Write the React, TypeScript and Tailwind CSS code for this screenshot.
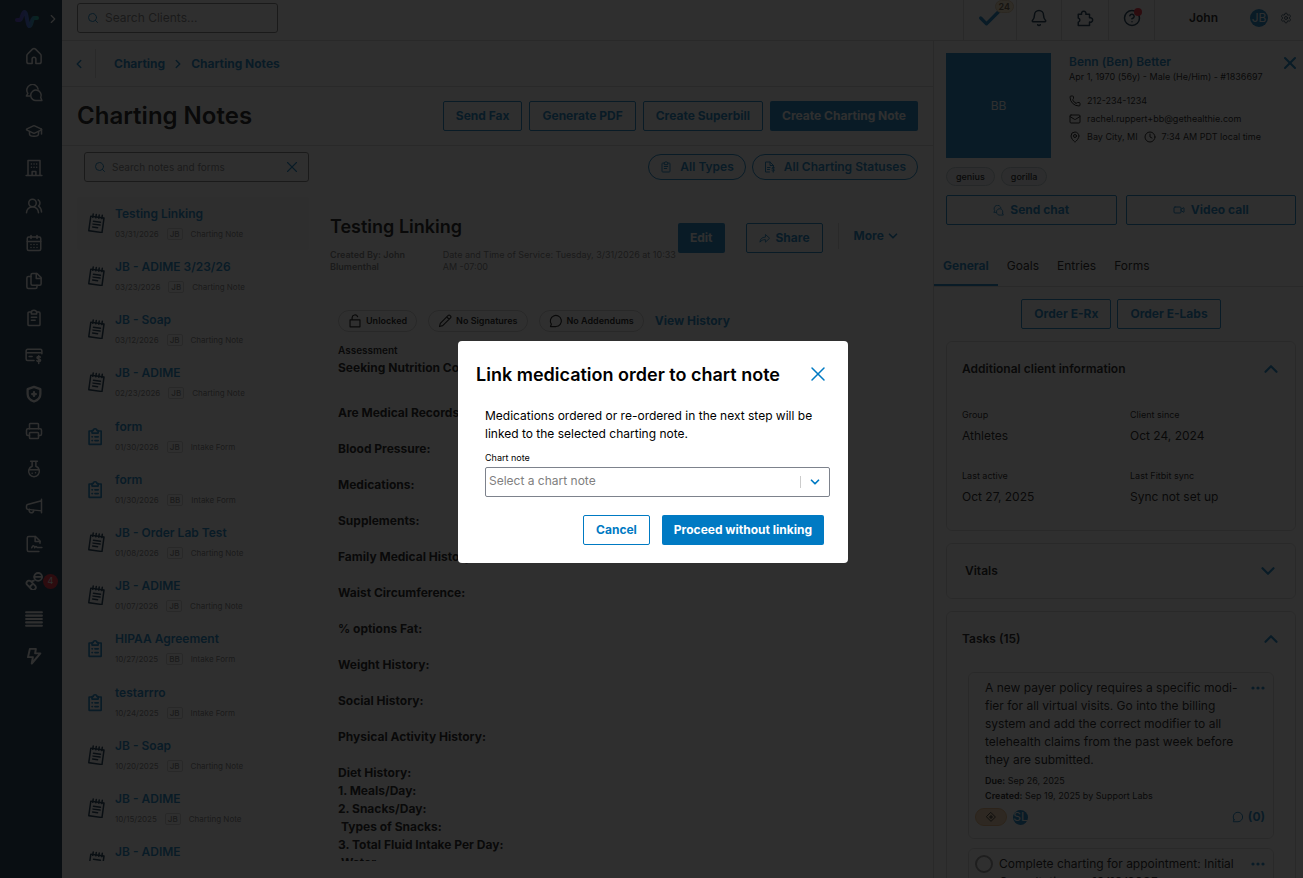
import type { ReactNode } from "react";
import {
  Bell,
  CalendarDays,
  Check,
  ChevronDown,
  ChevronLeft,
  ChevronRight,
  ChevronUp,
  CircleHelp,
  Clock,
  GraduationCap,
  Mail,
  MapPin,
  Phone,
  Printer,
  Search,
  Settings,
  UsersRound,
  Video,
  X,
} from "lucide-react";

type IconProps = { className?: string; width?: number; children: ReactNode };

function Glyph({ className = "size-[18px]", width = 2, children }: IconProps) {
  return (
    <svg
      viewBox="0 0 24 24"
      className={className}
      fill="none"
      stroke="currentColor"
      strokeWidth={width}
      strokeLinecap="round"
      strokeLinejoin="round"
      aria-hidden="true"
    >
      {children}
    </svg>
  );
}

function ChatsIcon({ className }: { className?: string }) {
  return (
    <Glyph className={className}>
      <path d="M6.5 16H1.800l2-3.500A7.600 7.600 0 1 1 17.500 6.800" />
      <path d="M21 18l1.500 4H16a7 7 0 1 1 5-4z" />
    </Glyph>
  );
}

function ClipboardIcon({ className }: { className?: string }) {
  return (
    <Glyph className={className}>
      <path d="M8.500 4H5.500A1.500 1.500 0 0 0 4 5.500V20.500A1.500 1.500 0 0 0 5.500 22h13a1.500 1.500 0 0 0 1.500-1.500V5.500A1.500 1.500 0 0 0 18.500 4H15.500" />
      <path d="M8.500 6.500V4.500a3.500 2.800 0 0 1 7 0v2zM8.500 11h7M8.500 15h5" />
    </Glyph>
  );
}

function BubbleIcon({ className }: { className?: string }) {
  return (
    <Glyph className={className}>
      <path d="M4 17.500 2.500 21.500H12A9.500 9.500 0 1 0 4 17.500z" />
    </Glyph>
  );
}

function NotepadIcon() {
  return (
    <Glyph className="mb-0.5 size-5 text-[#002540]" width={1.8}>
      <g transform="rotate(8 12 12)">
        <path d="M3.500 5h16v17.500h-16z" />
        <path d="M6 2v4M9.700 2v4M13.300 2v4M17 2v4M7.500 10.500h8.500M7.500 14h8.500M7.500 17.500h6" />
      </g>
    </Glyph>
  );
}

function FormIcon() {
  return (
    <Glyph className="mb-0.5 size-5 text-[#007ac3]" width={2}>
      <path d="M6 6H2.500v16H17V6H13.500" />
      <path d="M6 8.500V5.500H7.500a2.200 2.200 0 0 1 4.400 0h1.500V8.500zM6 13h.5M9.500 13h4M6 17.500h.5M9.500 17.500h4" />
    </Glyph>
  );
}

const navItems: { label: string; icon: ReactNode; badge?: string }[] = [
  {
    label: "Home",
    icon: (
      <Glyph>
        <path d="M5 22h4.500v-6a2.500 2.500 0 0 1 5 0v6H19a2.500 2.500 0 0 0 2.500-2.500v-8a3 3 0 0 0-1-2.200l-6.500-6.500a3 3 0 0 0-4 0l-6.500 6.500a3 3 0 0 0-1 2.200v8A2.500 2.500 0 0 0 5 22z" />
      </Glyph>
    ),
  },
  { label: "Chat", icon: <ChatsIcon className="size-[18px]" /> },
  { label: "Programs", icon: <GraduationCap className="size-[18px]" /> },
  {
    label: "Organization",
    icon: (
      <Glyph>
        <path d="M1.500 22h21M4 22V2h16v20M9.500 22v-5.500h5V22" />
        <path d="M8.500 6.500h.1M12 6.500h.1M15.500 6.500h.1M8.500 11h.1M12 11h.1M15.500 11h.1" />
      </Glyph>
    ),
  },
  { label: "Clients", icon: <UsersRound className="size-[18px]" /> },
  { label: "Calendar", icon: <CalendarDays className="size-[18px]" /> },
  {
    label: "Documents",
    icon: (
      <Glyph>
        <path d="M10 2h6l5.500 5.500V15.500a2 2 0 0 1-2 2H10a2 2 0 0 1-2-2V4a2 2 0 0 1 2-2z" />
        <path d="M15 2v6.500h6.500M8 6H4.500a2 2 0 0 0-2 2v12a2 2 0 0 0 2 2H14a2 2 0 0 0 2-2v-2.500" />
      </Glyph>
    ),
  },
  { label: "Forms", icon: <ClipboardIcon className="size-[18px]" /> },
  {
    label: "Billing",
    icon: (
      <Glyph>
        <path d="M12 18H3.500a2 2 0 0 1-2-2V5a2 2 0 0 1 2-2h17a2 2 0 0 1 2 2v4M1.500 7.500h21M5.500 12.500h4" />
        <path d="M20.500 13.500c-.6-1-4.500-1.200-4.500.7 0 2.200 4.800 1.300 4.800 3.600 0 2-4.200 2-5 .5M18.300 11.500v10.500" />
      </Glyph>
    ),
  },
  {
    label: "Insurance",
    icon: (
      <Glyph width={3}>
        <path d="M12 2.500 3.500 5.500v6.500c0 5 4 8.500 8.500 10 4.500-1.500 8.500-5 8.500-10V5.500z" />
        <path d="M12 9.500v5M9.500 12h5" />
      </Glyph>
    ),
  },
  { label: "Fax", icon: <Printer className="size-[18px]" /> },
  {
    label: "Labs",
    icon: (
      <Glyph>
        <path d="M7.500 1.500h9M9.500 2v6.300a7.200 7.200 0 1 0 5 0V2M5.500 13h13M9.500 17.500h.1M14 17h.1" />
      </Glyph>
    ),
  },
  {
    label: "Marketing",
    icon: (
      <Glyph>
        <path d="M22 3v18M22 5 3.500 10a2 2 0 0 0-1.500 2v2.500a2 2 0 0 0 2 2l18 2M6 16.500a3 3 0 1 0 5.500 1" />
      </Glyph>
    ),
  },
  {
    label: "Reports",
    icon: (
      <Glyph>
        <path d="M20 11V8l-6-6H5a2 2 0 0 0-2 2v16a2 2 0 0 0 2 2h13.500" />
        <path d="M13.500 2v6.500H20M9 17c1.500-3.500 3-3.500 4 0 1-2 2-2 3-.5h6.500" />
      </Glyph>
    ),
  },
  {
    label: "Medications",
    badge: "4",
    icon: (
      <Glyph width={2.400}>
        <circle cx="17.500" cy="6.500" r="5.200" />
        <path d="M12.500 6.500h10M2.800 12.800a3.400 3.400 0 0 1 5-.3l5.700 5.700a3.400 3.400 0 0 1-4.800 4.800L3 17.300a3.400 3.400 0 0 1-.2-4.500zM6.200 20l4.500-4.500M11.800 11.500l-3 1" />
      </Glyph>
    ),
  },
  {
    label: "Lists",
    icon: (
      <Glyph width={2.8}>
        <path d="M1.500 3h21M1.500 7.500h21M1.500 12h21M1.500 16.500h21M1.500 21h21" />
      </Glyph>
    ),
  },
  {
    label: "Automations",
    icon: (
      <Glyph width={2.600}>
        <path d="M6.500 2.500h8L13.500 8.500H20.500L9 22l1.500-8.500H4z" />
      </Glyph>
    ),
  },
];

const notes = [
  { title: "Testing Linking", date: "03/31/2026", by: "JB", form: false },
  { title: "JB - ADIME 3/23/26", date: "03/23/2026", by: "JB", form: false },
  { title: "JB - Soap", date: "03/12/2026", by: "JB", form: false },
  { title: "JB - ADIME", date: "02/23/2026", by: "JB", form: false },
  { title: "form", date: "01/30/2026", by: "JB", form: true },
  { title: "form", date: "01/30/2026", by: "BB", form: true },
  { title: "JB - Order Lab Test", date: "01/08/2026", by: "JB", form: false },
  { title: "JB - ADIME", date: "01/07/2026", by: "JB", form: false },
  { title: "HIPAA Agreement", date: "10/27/2025", by: "BB", form: true },
  { title: "testarrro", date: "10/24/2025", by: "JB", form: true },
  { title: "JB - Soap", date: "10/20/2025", by: "JB", form: false },
  { title: "JB - ADIME", date: "10/15/2025", by: "JB", form: false },
  { title: "JB - ADIME", date: "10/13/2025", by: "JB", form: false },
];

const sections = [
  "Are Medical Records Available:",
  "Blood Pressure:",
  "Medications:",
  "Supplements:",
  "Family Medical History:",
  "Waist Circumference:",
  "% options Fat:",
  "Weight History:",
  "Social History:",
  "Physical Activity History:",
];

const outline =
  "flex h-[30px] items-center justify-center whitespace-nowrap rounded-[2px] border border-[#007ac3] px-3 font-bold text-[#007ac3]";
const solid =
  "flex h-[30px] items-center justify-center whitespace-nowrap rounded-[2px] bg-[#007ac3] px-3 font-bold text-white";

function Sidebar() {
  return (
    <nav className="w-[62px] shrink-0 bg-[#002540] text-white" aria-label="Main">
      <div className="flex h-[37px] items-center justify-end gap-1.5 pr-0.5">
        <svg viewBox="0 0 26 20" className="h-5 w-[26px]" fill="none" strokeWidth="4" strokeLinecap="round" strokeLinejoin="round" aria-hidden="true">
          <defs>
            <linearGradient id="pulse" x1="0" x2="1">
              <stop offset="0" stopColor="#4a2fd0" />
              <stop offset=".55" stopColor="#2f62e8" />
              <stop offset="1" stopColor="#00b8a0" />
            </linearGradient>
          </defs>
          <path stroke="url(#pulse)" d="M3 11h3c2 0 2-8 4.500-8s2.500 14 5 14 2-8 4.500-8h3" />
        </svg>
        <button aria-label="Expand menu">
          <ChevronRight className="size-3.5" />
        </button>
      </div>
      <ul className="grid h-[638px] auto-rows-fr">
        {navItems.map((item) => (
          <li key={item.label} className="relative flex items-center justify-center pl-[5px]">
            <a href="#" aria-label={item.label}>
              {item.icon}
            </a>
            {item.badge && (
              <span className="absolute right-1 flex size-[15px] items-center justify-center rounded-full bg-[#f0142d] text-[9px]">
                {item.badge}
              </span>
            )}
          </li>
        ))}
      </ul>
    </nav>
  );
}

function TopBar() {
  const cell = "flex items-center justify-center border-l border-[#d8d8d8]";
  return (
    <header className="flex h-[41px] shrink-0 border-b border-[#d8d8d8]">
      <div className="flex flex-1 items-start pt-[3px] pl-[15px]">
        <label className="flex h-[30px] w-[201px] items-center gap-1.5 rounded-[3px] border border-[#767676] px-[9px]">
          <Search className="size-3 shrink-0 text-[#007ac3]" />
          <input aria-label="Search clients" placeholder="Search Clients..." className="w-full min-w-0 bg-transparent outline-none placeholder:text-[#757575]" />
        </label>
      </div>
      <div className="flex text-[#002540]">
        <button className={`${cell} relative w-[53px] pb-1`} aria-label="Tasks">
          <Check className="size-7 text-[#007ac3]" strokeWidth={2.8} />
          <span className="absolute top-0 right-0.5 rounded-full border border-[#e0c8a0] bg-[#fbe6c4] px-[3px] text-[9px] leading-[11px] font-semibold text-[#5a4a30]">
            24
          </span>
        </button>
        <button className={`${cell} w-[45px] pb-1`} aria-label="Notifications">
          <Bell className="size-[18px]" />
        </button>
        <button className={`${cell} w-[47px] pb-1`} aria-label="Integrations">
          <Glyph className="size-[18px]">
            <path d="M3 7h4.500a3 3 0 1 1 5.600 0H18v4.800a3 3 0 1 1 0 5.500V22H3v-4.500a2.900 2.900 0 0 0 0-5.600z" />
          </Glyph>
        </button>
        <button className={`${cell} relative w-[46px] pb-1`} aria-label="Help">
          <CircleHelp className="size-[18px]" />
          <span className="absolute top-2 right-3 size-2 rounded-full bg-[#f0142d]" />
        </button>
        <div className={`${cell} w-[149px] justify-end gap-3 pr-[11px] pb-1`}>
          <span className="mr-5 font-semibold text-black">John</span>
          <span className="flex size-[18px] items-center justify-center rounded-full bg-[#007ac3] text-white">JB</span>
          <button aria-label="Settings">
            <Settings className="size-3" strokeWidth={1.600} />
          </button>
        </div>
      </div>
    </header>
  );
}

function NoteList() {
  return (
    <div className="w-[232px] shrink-0">
      <ul className="grid h-[692px] auto-rows-fr">
        {notes.map((note, i) => (
          <li key={i} className={`flex items-center gap-2 rounded-[2px] pl-2.5 ${i === 0 ? "bg-[#f8f8f8]" : ""}`}>
            {note.form ? <FormIcon /> : <NotepadIcon />}
            <div>
              <a href="#" className="block leading-[18px] font-semibold text-[#007ac3]">
                {note.title}
              </a>
              <div className="mt-0.5 flex h-[18px] items-center gap-2 text-[8px] text-[#757575]">
                <span>{note.date}</span>
                <span className="rounded-[2px] border border-[#d0d0d0] px-0.5 leading-[10px] font-medium">{note.by}</span>
                <span>{note.form ? "Intake Form" : "Charting Note"}</span>
              </div>
            </div>
          </li>
        ))}
      </ul>
    </div>
  );
}

function Chip({ icon, children }: { icon: ReactNode; children: ReactNode }) {
  return (
    <span className="flex h-[22px] items-center gap-1 rounded-full border border-[#cccccc] px-[9px] text-[9px] font-semibold whitespace-nowrap text-black">
      {icon}
      {children}
    </span>
  );
}

function NoteDetail() {
  return (
    <article className="min-w-0 flex-1 pr-[15px] pl-[21px]">
      <div className="flex pt-[19px]">
        <div className="w-[348px] shrink-0">
          <h2 className="text-[18px] leading-[22px] font-semibold text-black">Testing Linking</h2>
          <div className="mt-[11px] flex text-[9px] leading-[12px] text-[#757575]">
            <p className="w-[113px] pr-7 font-semibold">Created By: John Blumenthal</p>
            <p className="w-[236px]">Date and Time of Service: Tuesday, 3/31/2026 at 10:33 AM -07:00</p>
          </div>
        </div>
        <div className="flex items-start pt-[7px]">
          <button className={solid}>Edit</button>
          <button className={`${outline} ml-[21px] gap-1.5`}>
            <Glyph className="size-[11px]">
              <path d="M14 4v5C6 9 2.500 13.500 2 20c3-4 6.500-5.500 12-5.500V20l8.500-8z" />
            </Glyph>
            Share
          </button>
          <div className="ml-[15px] flex h-[26px] items-center border-l border-[#d8d8d8] pl-[15px]">
            <button className="flex items-center gap-0.5 font-bold text-[#007ac3]">
              More <ChevronDown className="size-3.5" strokeWidth={3} />
            </button>
          </div>
        </div>
      </div>
      <div className="mt-[37px] flex items-center gap-[11px] pl-2">
        <Chip
          icon={
            <Glyph className="size-3.5">
              <path d="M3.500 10h17v12h-17zM7 10V6.500a5 5 0 0 1 9.500-2" />
            </Glyph>
          }
        >
          Unlocked
        </Chip>
        <Chip
          icon={
            <Glyph className="size-3.5">
              <path d="M2.500 21.500 4 16 17.500 2.500a2 2 0 0 1 3 0l1 1a2 2 0 0 1 0 3L8 20zM15 5l4 4" />
            </Glyph>
          }
        >
          No Signatures
        </Chip>
        <Chip icon={<BubbleIcon className="size-3.5" />}>No Addendums</Chip>
        <a href="#" className="font-bold text-[#007ac3]">
          View History
        </a>
      </div>
      <div className="mt-[9px] pl-2 leading-[18px] font-bold text-black">
        <h3 className="text-[10px] font-semibold">Assessment</h3>
        <p className="mb-[27px]">Seeking Nutrition Counseling For:</p>
        {sections.map((s) => (
          <p key={s} className="mb-[18px]">
            {s}
          </p>
        ))}
        <p>Diet History:</p>
        <p>1. Meals/Day:</p>
        <p>2. Snacks/Day:</p>
        <p className="pl-[3px]">Types of Snacks:</p>
        <p>3. Total Fluid Intake Per Day:</p>
        <p className="pl-[3px]">Water:</p>
      </div>
    </article>
  );
}

function ChartingMain() {
  const pill =
    "flex h-[26px] items-center gap-2 rounded-full border border-[#007ac3] px-[11px] font-semibold whitespace-nowrap text-[#007ac3]";
  return (
    <main className="flex min-w-0 flex-1 flex-col">
      <nav className="flex h-[46px] shrink-0 items-center border-b border-[#d8d8d8] pl-2.5 font-bold text-[#007ac3]" aria-label="Breadcrumb">
        <button aria-label="Back">
          <ChevronLeft className="size-3.5" strokeWidth={2.600} />
        </button>
        <span className="ml-[9px] h-[29px] border-l border-[#d8d8d8]" />
        <a href="#" className="ml-[18px]">
          Charting
        </a>
        <ChevronRight className="mx-1.5 size-3.5" strokeWidth={2.600} />
        <a href="#">Charting Notes</a>
      </nav>
      <div className="flex h-[59px] shrink-0 items-center justify-between border-b border-[#d8d8d8] px-[15px]">
        <h1 className="text-[24px] font-semibold whitespace-nowrap text-black">Charting Notes</h1>
        <div className="flex gap-[7px]">
          <button className={outline}>Send Fax</button>
          <button className={outline}>Generate PDF</button>
          <button className={outline}>Create Superbill</button>
          <button className={solid}>Create Charting Note</button>
        </div>
      </div>
      <div className="flex shrink-0 items-center justify-between pt-1.5 pr-[15px] pl-[22px]">
        <label className="flex h-[30px] w-[225px] items-center gap-1.5 rounded-[3px] border border-[#767676] pr-[7px] pl-[9px]">
          <Search className="size-3 shrink-0 text-[#007ac3]" />
          <input aria-label="Search notes and forms" placeholder="Search notes and forms" className="w-full min-w-0 bg-transparent text-[10px] outline-none placeholder:text-[#757575]" />
          <X className="size-[18px] shrink-0 text-[#007ac3]" strokeWidth={1.5} />
        </label>
        <div className="flex gap-1.5">
          <button className={pill}>
            <ClipboardIcon className="size-3" />
            All Types
          </button>
          <button className={pill}>
            <Glyph className="size-3">
              <path d="M11 22H3V2h9l7 7v2M12 2v7h7M7 13h5M7 17h4" />
              <path d="M21 13.500c-1-1-5-1-5 1s5 1.500 5 3.800-4.500 2.200-5.500.7M18.500 12v10.500" />
            </Glyph>
            All Charting Statuses
          </button>
        </div>
      </div>
      <div className="mt-[15px] mb-[17px] flex min-h-0 flex-1 overflow-hidden pl-[15px]">
        <NoteList />
        <NoteDetail />
      </div>
    </main>
  );
}

function Card({ title, open, children }: { title: string; open: boolean; children?: ReactNode }) {
  const Chevron = open ? ChevronUp : ChevronDown;
  return (
    <section className="rounded-md border border-[#d8d8d8] px-[15px]">
      <button className={`flex h-[54px] w-full items-center justify-between font-semibold text-black ${open ? "" : "px-[3px]"}`}>
        {title}
        <Chevron className="-mr-0.5 size-[22px] text-[#007ac3]" strokeWidth={2.400} />
      </button>
      {children}
    </section>
  );
}

function Field({ label, value }: { label: string; value: string }) {
  return (
    <div className="h-[61px] text-black">
      <dt className="text-[9px] leading-[18px]">{label}</dt>
      <dd className="mt-[3px] leading-[18px]">{value}</dd>
    </div>
  );
}

function Dots() {
  return (
    <button className="flex h-[18px] shrink-0 items-center text-[#007ac3]" aria-label="Task options">
      <svg viewBox="0 0 14 4" className="h-1 w-3.5" fill="currentColor" aria-hidden="true">
        <circle cx="2" cy="2" r="1.600" />
        <circle cx="7" cy="2" r="1.600" />
        <circle cx="12" cy="2" r="1.600" />
      </svg>
    </button>
  );
}

function ClientPanel() {
  const tab = "border-b-2 border-transparent px-[9px] pt-0.5";
  const tag = "flex h-[19px] items-center rounded-full border border-[#b8c6ce] bg-[#eef1f3] px-[9px]";
  return (
    <aside className="w-[370px] shrink-0 overflow-hidden border-l border-[#d8d8d8]">
      <div className="pt-3 pr-[7px] pl-3">
        <div className="flex">
          <div className="flex size-[105px] shrink-0 items-center justify-center bg-[#007ac3] text-white">BB</div>
          <div className="ml-[18px] flex-1 text-[9px] leading-[18px] whitespace-nowrap text-black">
            <h2 className="text-[12px] font-semibold text-[#007ac3]">Benn (Ben) Better</h2>
            <p className="leading-[12px]">Apr 1, 1970 (56y) - Male (He/Him) - #1836697</p>
            <p className="mt-[9px] flex items-center gap-1.5">
              <Phone className="size-3" /> 212-234-1234
            </p>
            <p className="flex items-center gap-1.5">
              <Mail className="size-3" /> rachel.ruppert+bb@gethealthie.com
            </p>
            <p className="flex items-center gap-1.5">
              <MapPin className="size-3" /> Bay City, MI <Clock className="size-3" /> 7:34 AM PDT local time
            </p>
          </div>
          <button className="self-start text-[#007ac3]" aria-label="Close client panel">
            <X className="-mr-1 size-5" strokeWidth={2.500} />
          </button>
        </div>
        <div className="mt-[9px] flex gap-1.5 text-[9px] font-medium text-black">
          <span className={tag}>genius</span>
          <span className={tag}>gorilla</span>
        </div>
        <div className="mt-[9px] flex gap-[9px]">
          <button className={`${outline} flex-1 gap-1.5`}>
            <ChatsIcon className="size-[11px]" />
            Send chat
          </button>
          <button className={`${outline} flex-1 gap-1.5`}>
            <Video className="size-3" />
            Video call
          </button>
        </div>
      </div>
      <div className="mt-5 flex border-b border-[#d8d8d8] text-black" role="tablist">
        <button role="tab" aria-selected="true" className="h-[41px] border-b-2 border-[#007ac3] px-[9px] pt-0.5 font-bold text-[#007ac3]">
          General
        </button>
        <button role="tab" className={tab}>Goals</button>
        <button role="tab" className={tab}>Entries</button>
        <button role="tab" className={tab}>Forms</button>
      </div>
      <div className="flex justify-center gap-1.5 py-3 pr-[7px] pl-3">
        <button className={outline}>Order E-Rx</button>
        <button className={outline}>Order E-Labs</button>
      </div>
      <div className="flex flex-col gap-3 pr-[7px] pl-3">
        <Card title="Additional client information" open>
          <dl className="mt-2.5 grid grid-cols-[168px_1fr] pb-0.5">
            <Field label="Group" value="Athletes" />
            <Field label="Client since" value="Oct 24, 2024" />
            <Field label="Last active" value="Oct 27, 2025" />
            <Field label="Last Fitbit sync" value="Sync not set up" />
          </dl>
        </Card>
        <Card title="Vitals" open={false} />
        <Card title="Tasks (15)" open>
          <ul className="mx-1.5 mt-1.5 flex flex-col gap-[9px]">
            <li className="rounded-md border border-[#d8d8d8] pt-1.5 pr-2 pb-3 pl-1.5">
              <div className="flex">
                <p className="ml-2.5 w-[272px] leading-[18px] text-black">
                  A new payer policy requires a specific modi-
                  <br />
                  fier for all virtual visits. Go into the billing
                  <br />
                  system and add the correct modifier to all
                  <br />
                  telehealth claims from the past week before
                  <br />
                  they are submitted.
                </p>
                <Dots />
              </div>
              <p className="mt-1 ml-2.5 text-[9px] leading-[15px] text-black">
                <b className="font-semibold">Due:</b> Sep 26, 2025
                <br />
                <b className="font-semibold">Created:</b> Sep 19, 2025 by Support Labs
              </p>
              <div className="mt-[5px] flex items-center gap-1.5">
                <span className="flex h-[18px] w-8 items-center justify-center rounded-full border border-[#e8b070] bg-[#f6d2a8] text-black">
                  <Glyph className="size-2.5">
                    <path d="M12 1.500 22.500 12 12 22.500 1.500 12zM8 12h8M12 8v8" />
                  </Glyph>
                </span>
                <span className="flex size-[15px] items-center justify-center rounded-full bg-[#007ac3] text-white">SL</span>
                <button className="ml-auto flex items-center gap-1 font-bold text-[#007ac3]">
                  <BubbleIcon className="size-3" />
                  (0)
                </button>
              </div>
            </li>
            <li className="rounded-md border border-[#d8d8d8] pt-1.5 pr-2 pb-3 pl-1.5">
              <div className="flex">
                <input type="checkbox" aria-label="Mark task complete" className="size-[18px] shrink-0 appearance-none rounded-full border-2 border-[#8a8a8a]" />
                <p className="ml-1.5 w-[258px] leading-[18px] text-black">
                  Complete charting for appointment: Initial Consultation on <b>10/10/2025</b>
                </p>
                <Dots />
              </div>
            </li>
          </ul>
        </Card>
      </div>
    </aside>
  );
}

function LinkDialog() {
  return (
    <div className="fixed inset-0 flex items-center justify-center bg-[rgba(10,10,10,0.85)] pt-[26px] pl-[3px]">
      <div role="dialog" aria-modal="true" aria-labelledby="dialog-title" className="w-[390px] rounded-[4px] bg-white p-[18px] text-black">
        <div className="flex h-[30px] items-center justify-between">
          <h2 id="dialog-title" className="text-[18px] font-semibold">
            Link medication order to chart note
          </h2>
          <button aria-label="Close" className="text-[#007ac3]">
            <X className="size-6" strokeWidth={1.5} />
          </button>
        </div>
        <div className="mt-[18px] pl-[9px]">
          <p className="leading-[18px]">Medications ordered or re-ordered in the next step will be linked to the selected charting note.</p>
          <label htmlFor="chart-note" className="mt-2 block text-[9px] leading-[14px]">
            Chart note
          </label>
          <div className="mt-0.5 flex h-[30px] w-[345px] items-center rounded-[2px] border border-[#7d828c]">
            <select id="chart-note" defaultValue="" className="h-full flex-1 appearance-none bg-transparent pb-0.5 pl-[3px] text-[#808080] outline-none">
              <option value="">Select a chart note</option>
            </select>
            <span className="h-3 border-l border-[#cccccc]" />
            <ChevronDown className="mx-[7px] size-3.5 text-[#007ac3]" strokeWidth={3} />
          </div>
        </div>
        <div className="mt-[18px] flex justify-end gap-3 pr-1.5">
          <button className={outline}>Cancel</button>
          <button className={solid}>Proceed without linking</button>
        </div>
      </div>
    </div>
  );
}

export default function App() {
  return (
    <div className="flex h-screen overflow-hidden bg-white font-[Inter,sans-serif] text-[12px]">
      <Sidebar />
      <div className="flex min-w-0 flex-1 flex-col">
        <TopBar />
        <div className="flex min-h-0 flex-1">
          <ChartingMain />
          <ClientPanel />
        </div>
      </div>
      <LinkDialog />
    </div>
  );
}
